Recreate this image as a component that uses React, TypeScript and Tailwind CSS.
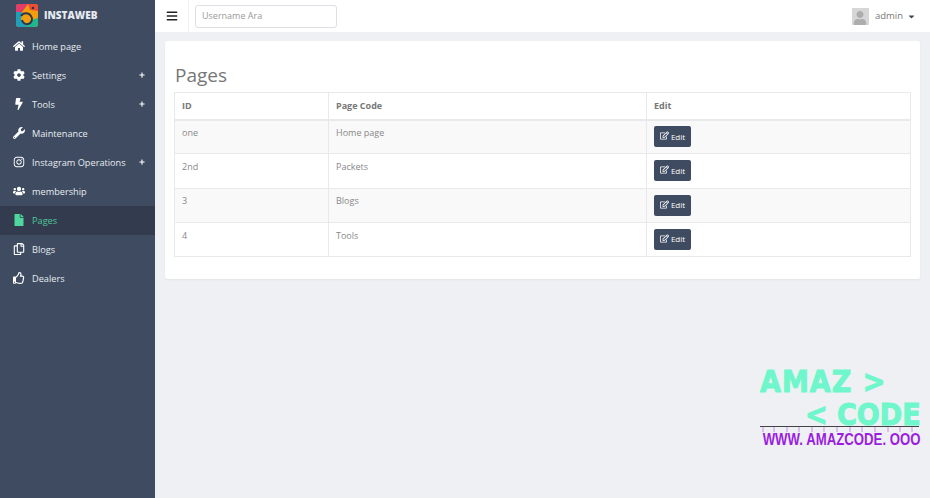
import React from 'react';
import { FaHome, FaCog, FaBolt, FaWrench, FaInstagram, FaUsers, FaFile, FaRegCopy, FaRegThumbsUp, FaBars, FaRegEdit, FaPlus, FaCaretDown, FaUser } from 'react-icons/fa';

const menu = [
  { label: 'Home page', icon: FaHome },
  { label: 'Settings', icon: FaCog, more: true },
  { label: 'Tools', icon: FaBolt, more: true },
  { label: 'Maintenance', icon: FaWrench },
  { label: 'Instagram Operations', icon: FaInstagram, more: true },
  { label: 'membership', icon: FaUsers },
  { label: 'Pages', icon: FaFile, active: true },
  { label: 'Blogs', icon: FaRegCopy },
  { label: 'Dealers', icon: FaRegThumbsUp },
];

const rows = [
  { id: 'one', code: 'Home page' },
  { id: '2nd', code: 'Packets' },
  { id: '3', code: 'Blogs' },
  { id: '4', code: 'Tools' },
];

const drips = [3, 14, 27, 39, 52, 64, 77, 90, 102, 115, 128, 140, 152];

// Colour block logo of the product
const Logo = () => (
  <svg width="25" height="25" viewBox="0 0 25 25">
    <rect x="2" y="1" width="22" height="23" rx="3" fill="#f59e0b" />
    <path d="M2 4a3 3 0 0 1 3-3h9L8 9H2z" fill="#e23c6a" />
    <path d="M14 1h7a3 3 0 0 1 3 3v4L16 7z" fill="#ef4e35" />
    <path d="M2 9h6l-1 8 7 7H5a3 3 0 0 1-3-3z" fill="#1f9fb8" />
    <path d="M12 24l5-7 7-2v6a3 3 0 0 1-3 3z" fill="#23b58e" />
    <path d="M7 13a6 6 0 0 1 10 0 5 5 0 0 1-3 8 5 5 0 0 1-6-4" fill="none" stroke="#2a3550" strokeWidth="2" />
    <circle cx="19" cy="5" r="1.3" fill="#2a3550" />
  </svg>
);

const Sidebar = () => (
  <aside className="flex w-[155px] shrink-0 flex-col bg-[#3e4b61] text-[#e8ebf0]">
    <div className="flex h-[32px] items-center pb-[1px] pl-[14px]">
      <Logo />
      <span className="ml-[5px] text-[10px] font-extrabold text-[#e6eaf0]">INSTAWEB</span>
    </div>
    <nav className="flex flex-col">
      {menu.map((item) => (
        <div
          key={item.label}
          className={`flex h-[29px] items-center pb-[1px] pl-[13px] pr-[10px] ${item.active ? 'bg-[#323c4e] text-[#4fc79a]' : ''}`}
        >
          <span className="flex w-[19px] shrink-0 justify-start">
            <item.icon className={`h-[12px] w-[12px] ${item.active ? 'text-[#4fd69c]' : 'text-white'}`} />
          </span>
          <span className="text-[9.2px] leading-[11px]">{item.label}</span>
          {item.more && <FaPlus className="ml-auto h-[6px] w-[6px] text-white" />}
        </div>
      ))}
    </nav>
  </aside>
);

const Topbar = () => (
  <header className="flex h-[32px] items-center bg-white">
    <div className="flex h-full w-[34px] items-center justify-center border-r border-[#f0f1f4]">
      <FaBars className="h-[12px] w-[12px] text-[#222]" />
    </div>
    <div className="ml-[6px] flex h-[23px] w-[142px] items-center rounded-[3px] border border-[#dcdfe4] pl-[6px] text-[9px] text-[#9a9a9a]">
      Username Ara
    </div>
    <div className="ml-auto flex items-center pr-[14px]">
      <span className="flex h-[17px] w-[17px] items-end justify-center overflow-hidden bg-[#d6d6d6]">
        <FaUser className="h-[14px] w-[14px] text-[#adadad]" />
      </span>
      <span className="ml-[6px] text-[9.5px] text-[#777]">admin</span>
      <FaCaretDown className="ml-[4px] h-[9px] w-[9px] text-[#444]" />
    </div>
  </header>
);

const PagesTable = () => (
  <table className="w-full table-fixed border-collapse border border-[#e8e9eb] text-[9px] text-[#888]">
    <colgroup>
      <col className="w-[154px]" />
      <col className="w-[318px]" />
      <col />
    </colgroup>
    <thead>
      <tr className="h-[27px] border-b-2 border-[#e8e9eb] text-[#777]">
        <th className="border-r border-[#e8e9eb] pl-[7px] text-left font-bold">ID</th>
        <th className="border-r border-[#e8e9eb] pl-[7px] text-left font-bold">Page Code</th>
        <th className="pl-[7px] text-left font-bold">Edit</th>
      </tr>
    </thead>
    <tbody>
      {rows.map((row, i) => (
        <tr key={row.id} className={`h-[34.25px] border-b border-[#e8e9eb] ${i % 2 === 0 ? 'bg-[#f9f9f9]' : 'bg-white'}`}>
          <td className="border-r border-[#e8e9eb] pb-[8px] pl-[7px] align-middle">{row.id}</td>
          <td className="border-r border-[#e8e9eb] pb-[8px] pl-[7px] align-middle">{row.code}</td>
          <td className="pl-[7px] align-middle">
            <button className="flex h-[21px] w-[37px] items-center justify-center gap-[2px] rounded-[2px] bg-[#3e4b61] text-[8px] text-white">
              <FaRegEdit className="mb-[2px] h-[9px] w-[9px]" />
              Edit
            </button>
          </td>
        </tr>
      ))}
    </tbody>
  </table>
);

// Watermark that sits on top of the page
const Watermark = () => (
  <div className="pointer-events-none absolute left-[760px] top-[368px] w-[160px] font-['DejaVu_Sans'] font-bold leading-none">
    <div className="origin-left scale-y-[1.1] whitespace-nowrap text-[27px] tracking-[1px] text-[#6ff7cb] [-webkit-text-stroke:1px_#6ff7cb]">AMAZ &gt;</div>
    <div className="mt-[6px] origin-left scale-y-[1.1] whitespace-nowrap pl-[45px] text-[27px] text-[#6ff7cb] [-webkit-text-stroke:1px_#6ff7cb]">&lt; CODE</div>
    <div className="-mt-[2px] h-px w-[159px] bg-[#444]" />
    <svg width="159" height="5" viewBox="0 0 159 5" className="block">
      {drips.map((x) => (
        <line key={x} x1={x} y1="0" x2={x} y2="5" stroke="#c88fe4" strokeWidth="1" />
      ))}
    </svg>
    <div className="-mt-[2px] origin-top-left scale-x-[0.88] scale-y-[1.15] whitespace-nowrap pl-[3px] font-['Liberation_Sans'] text-[15px] text-[#9b1ee0]">WWW. AMAZCODE. OOO</div>
  </div>
);

const App: React.FC = () => (
  <div className="relative flex h-[498px] w-[930px] overflow-hidden bg-[#eef0f4] font-['Open_Sans',sans-serif]">
    <Sidebar />
    <main className="flex min-w-0 flex-1 flex-col">
      <Topbar />
      <div className="pl-[10px] pr-[10px] pt-[9px]">
        <section className="rounded-[2px] bg-white pb-[22px] pl-[9px] pr-[9px] pt-[21px] shadow-[0_1px_2px_rgba(0,0,0,0.05)]">
          <h1 className="mb-[3px] ml-px h-[27px] text-[19px] leading-[27px] text-[#777]">Pages</h1>
          <PagesTable />
        </section>
      </div>
    </main>
    <Watermark />
  </div>
);

export default App;
